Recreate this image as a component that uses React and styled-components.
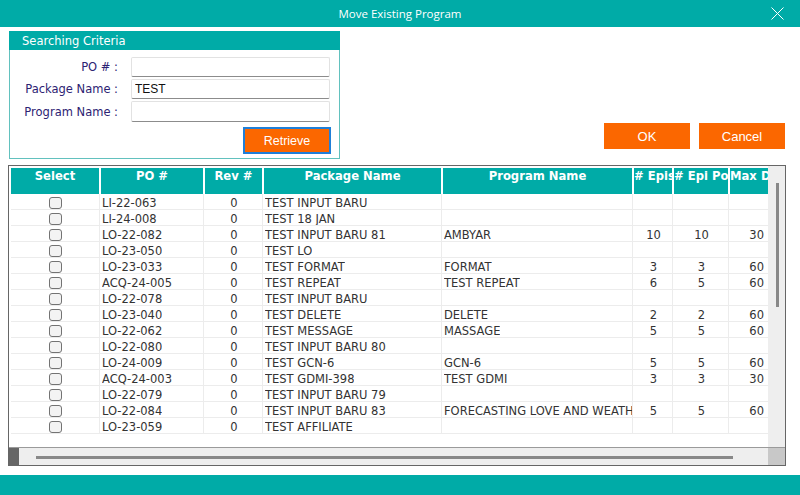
import React from 'react';
import styled, { createGlobalStyle } from 'styled-components';

const TEAL = '#00aba7';
const ORANGE = '#fb6700';

const GlobalStyle = createGlobalStyle`
  html, body {
    margin: 0;
    padding: 0;
    background: #fff;
    overflow: hidden;
  }
  * {
    box-sizing: border-box;
  }
`;

const Window = styled.div`
  width: 800px;
  height: 495px;
  display: flex;
  flex-direction: column;
  background: #fff;
  font-family: 'DejaVu Sans', Verdana, sans-serif;
`;

const TitleBar = styled.div`
  height: 27px;
  flex: none;
  background: ${TEAL};
  display: grid;
  grid-template-columns: 1fr auto 1fr;
  align-items: center;
  color: #fff;
`;

const Title = styled.div`
  grid-column: 2;
  font-family: 'Open Sans', sans-serif;
  font-size: 11.5px;
  line-height: 27px;
`;

const CloseButton = styled.div`
  grid-column: 3;
  justify-self: end;
  margin-right: 16px;
  width: 13px;
  height: 13px;
  display: flex;
`;

const Main = styled.div`
  flex: 1;
  display: flex;
  flex-direction: column;
  padding: 4px 15px 0 8px;
`;

const TopRow = styled.div`
  display: flex;
  justify-content: space-between;
  align-items: flex-end;
`;

const SearchPanel = styled.div`
  width: 331px;
  margin-left: 1px;
  display: flex;
  flex-direction: column;
`;

const PanelHeader = styled.div`
  height: 19px;
  background: ${TEAL};
  color: #fff;
  font-size: 11.5px;
  line-height: 20px;
  padding-left: 13px;
`;

const PanelBody = styled.div`
  border: 1px solid #62c1be;
  border-top: none;
  padding: 7px 8px 4px 0;
  display: grid;
  grid-template-columns: 108px 199px;
  column-gap: 13px;
  row-gap: 2px;
  align-items: center;
`;

const Label = styled.label`
  text-align: right;
  font-size: 11.5px;
  color: #2d2272;
  white-space: nowrap;
`;

const TextInput = styled.input`
  height: ${(p) => p.$h || 20}px;
  width: 199px;
  border: 1px solid #e2e2e2;
  border-bottom: 1px solid #8c8c8c;
  border-radius: 2px;
  padding: 0 3px;
  font-family: 'Liberation Sans', Arial, sans-serif;
  font-size: 12px;
  color: #111;
  outline: none;
  background: #fff;
`;

const RetrieveRow = styled.div`
  grid-column: 1 / span 2;
  display: flex;
  justify-content: flex-end;
  margin-top: 3px;
  margin-right: -1px;
`;

const OrangeButton = styled.button`
  background: ${ORANGE};
  color: #fff;
  font-family: 'Liberation Sans', Arial, sans-serif;
  font-size: ${(p) => p.$fs || 13}px;
  width: ${(p) => p.$w}px;
  height: ${(p) => p.$h}px;
  border: ${(p) => (p.$focused ? '2px solid #1f7fd8' : 'none')};
  padding: 0;
  cursor: pointer;
`;

const ButtonGroup = styled.div`
  display: flex;
  gap: 9px;
  margin-bottom: 10px;
`;

const GridBox = styled.div`
  margin-top: 6px;
  width: 778px;
  height: 301px;
  border: 1px solid #666;
  display: flex;
  flex-direction: column;
`;

const GridTop = styled.div`
  height: 281px;
  display: flex;
`;

const Viewport = styled.div`
  flex: 1;
  overflow: hidden;
  padding: 2px 0 0 2px;
`;

const Sheet = styled.div`
  width: 900px;
`;

const COLS = '88px 102px 57px 177px 189px 38px 54px 39px';

const HeaderRow = styled.div`
  display: grid;
  grid-template-columns: ${COLS};
  column-gap: 2px;
  height: 26px;
`;

const HeaderCell = styled.div`
  background: ${TEAL};
  color: #fff;
  font-weight: bold;
  font-size: 11.6px;
  line-height: 14px;
  padding-top: 1px;
  text-align: center;
  white-space: nowrap;
  overflow: hidden;
`;

const DataRow = styled.div`
  display: grid;
  grid-template-columns: ${COLS};
  column-gap: 2px;
  height: 16px;
  border-bottom: 1px solid #ececec;
`;

const Cell = styled.div`
  font-size: 11.5px;
  line-height: 14px;
  color: #333;
  white-space: nowrap;
  overflow: hidden;
  padding: ${(p) => (p.$align === 'right' ? '2px 5px 0 0' : '2px 0 0 1px')};
  box-shadow: 1px 0 0 #ececec;
  display: flex;
  justify-content: ${(p) =>
    p.$align === 'center' ? 'center' : p.$align === 'right' ? 'flex-end' : 'flex-start'};
  align-items: flex-start;
`;

const CellText = styled.span`
  overflow: hidden;
`;

const Check = styled.input.attrs({ type: 'checkbox' })`
  appearance: none;
  width: 13px;
  height: 12px;
  margin: 1px 0 0;
  border: 1px solid #737373;
  border-radius: 3px;
  background: #f3f3f3;
`;

const VScroll = styled.div`
  width: 17px;
  background: #eeeeee;
  display: flex;
  justify-content: center;
  padding-top: 17px;
`;

const VThumb = styled.div`
  width: 3px;
  height: 124px;
  margin-left: 2px;
  background: #888;
`;

const HScroll = styled.div`
  height: 18px;
  display: flex;
  border-top: 1px solid #9a9a9a;
`;

const HLeft = styled.div`
  width: 10px;
  background: #666;
`;

const HTrack = styled.div`
  flex: 1;
  background: #eeeeee;
  display: flex;
  align-items: center;
  padding-left: 17px;
`;

const HThumb = styled.div`
  width: 697px;
  height: 3px;
  background: #888;
  margin-top: 1px;
`;

const Corner = styled.div`
  width: 17px;
  background: #c8c8c8;
`;

const Footer = styled.div`
  margin-top: auto;
  height: 20px;
  flex: none;
  background: ${TEAL};
`;

const headers = ['Select', 'PO #', 'Rev #', 'Package Name', 'Program Name', '# Episode', '# Epi Posted', 'Max Duration'];

const rows = [
  ['LI-22-063', 'TEST INPUT BARU'],
  ['LI-24-008', 'TEST 18 JAN'],
  ['LO-22-082', 'TEST INPUT BARU 81', 'AMBYAR', '10', '10', '30'],
  ['LO-23-050', 'TEST LO'],
  ['LO-23-033', 'TEST FORMAT', 'FORMAT', '3', '3', '60'],
  ['ACQ-24-005', 'TEST REPEAT', 'TEST REPEAT', '6', '5', '60'],
  ['LO-22-078', 'TEST INPUT BARU'],
  ['LO-23-040', 'TEST DELETE', 'DELETE', '2', '2', '60'],
  ['LO-22-062', 'TEST MESSAGE', 'MASSAGE', '5', '5', '60'],
  ['LO-22-080', 'TEST INPUT BARU 80'],
  ['LO-24-009', 'TEST GCN-6', 'GCN-6', '5', '5', '60'],
  ['ACQ-24-003', 'TEST GDMI-398', 'TEST GDMI', '3', '3', '30'],
  ['LO-22-079', 'TEST INPUT BARU 79'],
  ['LO-22-084', 'TEST INPUT BARU 83', 'FORECASTING LOVE AND WEATHER', '5', '5', '60'],
  ['LO-23-059', 'TEST AFFILIATE'],
];

function App() {
  return (
    <Window>
      <GlobalStyle />
      <TitleBar>
        <Title>Move Existing Program</Title>
        <CloseButton>
          <svg width="13" height="13" viewBox="0 0 13 13">
            <path d="M0.5 0.5 L12.5 12.5 M12.5 0.5 L0.5 12.5" stroke="#fff" strokeWidth="1" />
          </svg>
        </CloseButton>
      </TitleBar>
      <Main>
        <TopRow>
          <SearchPanel>
            <PanelHeader>Searching Criteria</PanelHeader>
            <PanelBody>
              <Label>PO # :</Label>
              <TextInput defaultValue="" />
              <Label>Package Name :</Label>
              <TextInput defaultValue="TEST" />
              <Label>Program Name :</Label>
              <TextInput defaultValue="" $h={21} />
              <RetrieveRow>
                <OrangeButton $w={88} $h={27} $fs={12.5} $focused>
                  Retrieve
                </OrangeButton>
              </RetrieveRow>
            </PanelBody>
          </SearchPanel>
          <ButtonGroup>
            <OrangeButton $w={86} $h={26}>OK</OrangeButton>
            <OrangeButton $w={86} $h={26}>Cancel</OrangeButton>
          </ButtonGroup>
        </TopRow>
        <GridBox>
          <GridTop>
            <Viewport>
              <Sheet>
                <HeaderRow>
                  {headers.map((h) => (
                    <HeaderCell key={h}>{h}</HeaderCell>
                  ))}
                </HeaderRow>
                {rows.map(([po, pkg, prog = '', epi = '', posted = '', dur = '']) => (
                  <DataRow key={po}>
                    <Cell $align="center">
                      <Check />
                    </Cell>
                    <Cell><CellText>{po}</CellText></Cell>
                    <Cell $align="center">0</Cell>
                    <Cell><CellText>{pkg}</CellText></Cell>
                    <Cell><CellText>{prog}</CellText></Cell>
                    <Cell $align="center">{epi}</Cell>
                    <Cell $align="center">{posted}</Cell>
                    <Cell $align="right">{dur}</Cell>
                  </DataRow>
                ))}
              </Sheet>
            </Viewport>
            <VScroll>
              <VThumb />
            </VScroll>
          </GridTop>
          <HScroll>
            <HLeft />
            <HTrack>
              <HThumb />
            </HTrack>
            <Corner />
          </HScroll>
        </GridBox>
      </Main>
      <Footer />
    </Window>
  );
}

export default App;
